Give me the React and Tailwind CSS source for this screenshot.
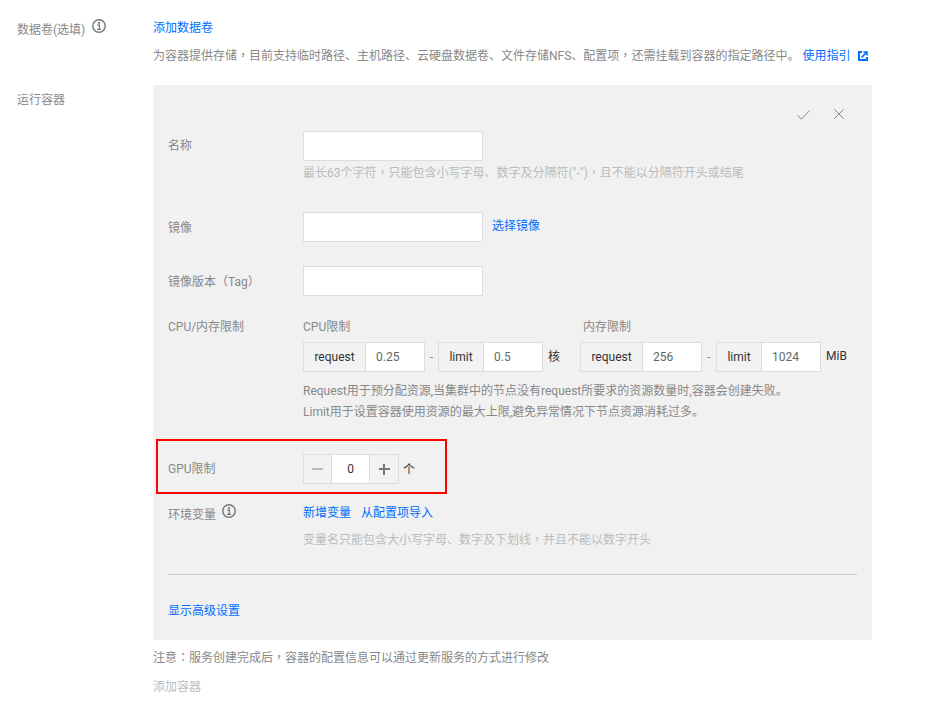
function InfoIcon() {
  return (
    <svg width="14" height="14" viewBox="0 0 14 14" fill="none" className="shrink-0">
      <circle cx="7" cy="7" r="6.2" stroke="#777" strokeWidth="1.4" />
      <rect x="6" y="3" width="2" height="1.8" fill="#777" />
      <path d="M5.2 6.2H7.4V10M5 10.4H9" stroke="#777" strokeWidth="1.3" />
    </svg>
  );
}

function ExternalIcon() {
  return (
    <svg width="10" height="10" viewBox="0 0 10 10" fill="none">
      <path d="M4 1H1v8h8V6" stroke="#006eff" strokeWidth="2" />
      <path d="M3.6 6.4 8 2M5.4 1h3.6v3.6" stroke="#006eff" strokeWidth="1.6" />
    </svg>
  );
}

// centred full-width punctuation, as in the reference
function P({ children }) {
  return <span className="leading-none font-['Noto_Sans_CJK_TC',sans-serif]">{children}</span>;
}

function TextBox() {
  return <div className="w-[180px] h-[30px] bg-white border border-[#dddddd]" />;
}

function Limit({ label, value, labelW }) {
  return (
    <div className="flex h-[30px] border border-[#dddddd] text-[#333]">
      <div className={`${labelW} flex items-center justify-center bg-[#f2f2f2] border-r border-[#dddddd]`}>{label}</div>
      <div className="w-[58px] flex items-center pl-[10px] bg-white text-[#666]">{value}</div>
    </div>
  );
}

export default function App() {
  return (
    <div className="w-[948px] h-[704px] overflow-hidden bg-white text-[12px] leading-[18px] text-[#888] font-['Roboto','Noto_Sans_CJK_SC',sans-serif]">
      <div className="flex pl-[17px] pt-[19px] h-[85px]">
        <div className="w-[136px] flex items-start gap-[7px]">
          <span className="mt-[2px]">数据卷(选填)</span>
          <InfoIcon />
        </div>
        <div>
          <div className="text-[#006eff]">添加数据卷</div>
          <div className="mt-[10px] flex items-center whitespace-nowrap">
            <span>为容器提供存储<P>，</P>目前支持临时路径、主机路径、云硬盘数据卷、文件存储NFS、配置项<P>，</P>还需挂载到容器的指定路径中。</span>
            <span className="ml-[3px] text-[#006eff]">使用指引</span>
            <span className="ml-[8px]"><ExternalIcon /></span>
          </div>
        </div>
      </div>

      <div className="flex pl-[17px]">
        <div className="w-[136px] pt-[6px]">运行容器</div>
        <div className="w-[719px] h-[555px] bg-[#f1f1f1] px-[15px]">
          <div className="flex justify-end gap-[24px] pt-[24px] pr-[13px] h-[46px]">
            <svg width="13" height="10" viewBox="0 0 13 10" fill="none" className="mt-[1px]">
              <path d="M0.4 5.2 4.4 9.2 12.6 0.6" stroke="#888" strokeWidth="1" />
            </svg>
            <svg width="10" height="10" viewBox="0 0 10 10" fill="none">
              <path d="M0.3 0.3 9.7 9.7M9.7 0.3 0.3 9.7" stroke="#888" strokeWidth="1" />
            </svg>
          </div>

          <div className="flex">
            <div className="w-[135px] pt-[6px]">名称</div>
            <div>
              <TextBox />
              <div className="mt-[3px] text-[#bbb] whitespace-nowrap">最长63个字符<P>，</P>只能包含小写字母、数字及分隔符("-")<P>，</P>且不能以分隔符开头或结尾</div>
            </div>
          </div>

          <div className="flex mt-[30px]">
            <div className="w-[135px] pt-[7px]">镜像</div>
            <TextBox />
            <div className="ml-[9px] pt-[5px] text-[#006eff]">选择镜像</div>
          </div>

          <div className="flex mt-[24px]">
            <div className="w-[135px] pt-[7px] whitespace-nowrap">镜像版本<P>（</P>Tag<P>）</P></div>
            <TextBox />
          </div>

          <div className="flex mt-[21px]">
            <div className="w-[135px] pt-[1px]">CPU/内存限制</div>
            <div>
              <div className="flex pt-[1px]">
                <div className="w-[280px]">CPU限制</div>
                <div>内存限制</div>
              </div>
              <div className="flex items-center mt-[6px] whitespace-nowrap">
                <Limit label="request" value="0.25" labelW="w-[62px]" />
                <span className="w-[13px] text-center">-</span>
                <Limit label="limit" value="0.5" labelW="w-[45px]" />
                <span className="ml-[5px] w-[32px] text-[#333]">核</span>
                <Limit label="request" value="256" labelW="w-[62px]" />
                <span className="w-[14px] text-center">-</span>
                <Limit label="limit" value="1024" labelW="w-[45px]" />
                <span className="ml-[5px] mb-[2px] text-[#333]">MiB</span>
              </div>
              <div className="mt-[9px] leading-[21px] whitespace-nowrap">
                <div>Request用于预分配资源,当集群中的节点没有request所要求的资源数量时,容器会创建失败。</div>
                <div>Limit用于设置容器使用资源的最大上限,避免异常情况下节点资源消耗过多。</div>
              </div>
            </div>
          </div>

          <div className="relative flex items-center mt-[31px] h-[30px]">
            <div className="w-[135px]">GPU限制</div>
            <div className="flex h-[30px] border border-[#dddddd]">
              <div className="w-[28px] flex items-center justify-center bg-[#f2f2f2] border-r border-[#dddddd]">
                <span className="w-[11px] h-[2px] bg-[#bbb]" />
              </div>
              <div className="w-[37px] flex items-center justify-center bg-white text-[#333]">0</div>
              <div className="relative w-[29px] flex items-center justify-center bg-[#f2f2f2] border-l border-[#dddddd]">
                <span className="w-[11px] h-[2px] bg-[#777]" />
                <span className="absolute w-[2px] h-[11px] bg-[#777]" />
              </div>
            </div>
            <span className="ml-[4px] mt-[2px] text-[#333]">个</span>
            <div className="absolute left-[-12px] top-[-15px] w-[291px] h-[55px] border-2 border-[#ff0000]" />
          </div>

          <div className="flex mt-[20px]">
            <div className="w-[135px] flex items-start gap-[6px]">
              <span className="mt-[2px]">环境变量</span>
              <InfoIcon />
            </div>
            <div>
              <div className="flex gap-[10px] text-[#006eff]">
                <span>新增变量</span>
                <span>从配置项导入</span>
              </div>
              <div className="mt-[9px] text-[#bbb]">变量名只能包含大小写字母、数字及下划线<P>，</P>并且不能以数字开头</div>
            </div>
          </div>

          <div className="mt-[25px] h-px bg-[#cccccc]" />
          <div className="mt-[27px] text-[#006eff]">显示高级设置</div>
        </div>
      </div>

      <div className="pl-[153px]">
        <div className="mt-[9px]">注意<P>：</P>服务创建完成后<P>，</P>容器的配置信息可以通过更新服务的方式进行修改</div>
        <div className="mt-[11px] text-[#bbb]">添加容器</div>
      </div>
    </div>
  );
}
